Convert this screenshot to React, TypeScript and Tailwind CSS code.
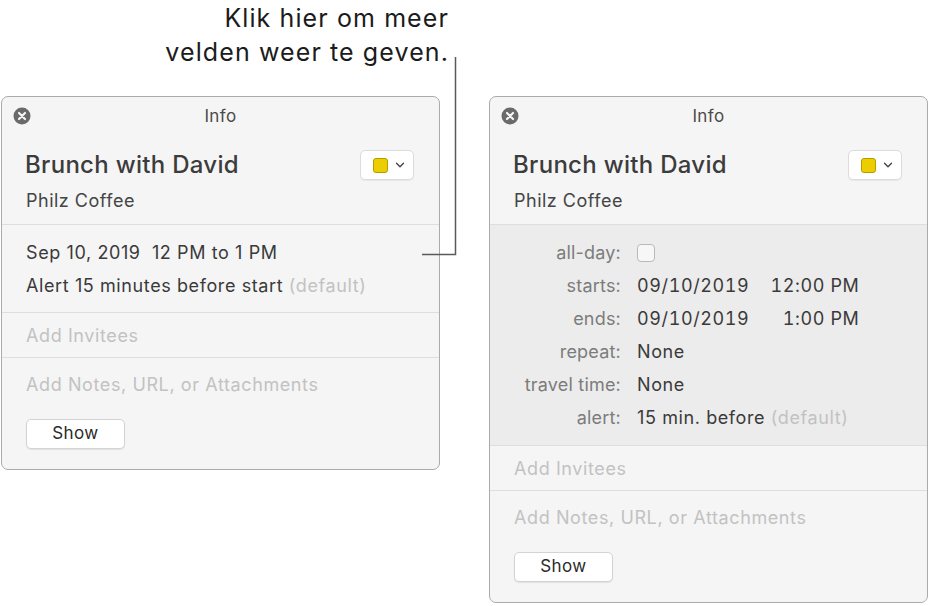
import { ChevronDown } from "lucide-react";

const font = { fontFamily: "Inter, 'Noto Sans', sans-serif" };

function CloseButton() {
  return (
    <svg width="18" height="18" viewBox="0 0 18 18" className="absolute left-[11px] top-[10px]">
      <circle cx="9" cy="9" r="8.5" fill="#6a6a6a" />
      <path d="M6 6 L12 12 M12 6 L6 12" stroke="#f5f5f5" strokeWidth="2.2" strokeLinecap="round" />
    </svg>
  );
}

function ColorPicker() {
  return (
    <div className="flex h-[30px] w-[54px] items-center gap-[5px] rounded-[5px] border border-[#dcdcdc] bg-white pl-[12px] shadow-[0_1px_1px_rgba(0,0,0,0.06)]">
      <div className="h-[15px] w-[15px] rounded-[3px] border border-[#b59d00] bg-[#ecce00]" />
      <ChevronDown className="h-[14px] w-[14px] text-[#444]" strokeWidth={2.4} />
    </div>
  );
}

function Header() {
  return (
    <>
      <div className="relative flex h-[38px] items-center justify-center pt-[1px] text-[17px] tracking-[0.4px] text-[#4a4a4a]">
        <CloseButton />
        Info
      </div>
      <div className="border-b border-[#dedede] px-[24px] pb-[11px] pt-[15px]">
        <div className="flex h-[30px] items-center justify-between">
          <span className="-ml-[1px] text-[24px] font-medium tracking-[0.3px] text-[#3c3c3c]">Brunch with David</span>
          <div className="mr-[1px]">
            <ColorPicker />
          </div>
        </div>
        <div className="mt-[9px] h-[24px] text-[18px] leading-[24px] tracking-[0.5px] text-[#444]">Philz Coffee</div>
      </div>
    </>
  );
}

function Footer() {
  return (
    <>
      <div className="flex h-[45px] items-center border-b border-[#dedede] px-[24px] text-[18px] tracking-[0.6px] text-[#c2c2c2]">
        Add Invitees
      </div>
      <div className="px-[24px] pb-[20px] pt-[15px]">
        <div className="h-[24px] text-[18px] leading-[24px] tracking-[0.6px] text-[#c2c2c2]">Add Notes, URL, or Attachments</div>
        <button className="mt-[22px] h-[30px] w-[99px] rounded-[5px] border border-[#d3d3d3] bg-white text-[17px] tracking-[0.4px] text-[#2a2a2a] shadow-[0_1px_1px_rgba(0,0,0,0.08)]">
          Show
        </button>
      </div>
    </>
  );
}

const rows: { label: string; value: React.ReactNode }[] = [
  {
    label: "all-day:",
    value: <div className="h-[18px] w-[18px] rounded-[4px] border border-[#b9b9b9] bg-[#f7f7f7]" />,
  },
  {
    label: "starts:",
    value: (
      <span className="flex tabular-nums">
        <span>09/10/2019</span>
        <span className="w-[110px] text-right">12:00 PM</span>
      </span>
    ),
  },
  {
    label: "ends:",
    value: (
      <span className="flex tabular-nums">
        <span>09/10/2019</span>
        <span className="w-[110px] text-right">1:00 PM</span>
      </span>
    ),
  },
  { label: "repeat:", value: "None" },
  { label: "travel time:", value: "None" },
  {
    label: "alert:",
    value: (
      <span>
        15 min. before <span className="text-[#c2c2c2]">(default)</span>
      </span>
    ),
  },
];

export default function App() {
  return (
    <div className="relative h-[606px] w-[931px] overflow-hidden bg-white" style={font}>
      <div className="w-[449px] pt-[1px] text-right text-[25px] leading-[34px] tracking-[1.1px] text-[#1b1b1b]">
        Klik hier om meer
        <br />
        velden weer te geven.
      </div>

      <div className="mt-[27px] flex items-start gap-[49px] pl-[1px]">
        <div className="w-[439px] overflow-hidden rounded-[7px] border border-[#ababab] bg-[#f5f5f5]">
          <Header />
          <div className="border-b border-[#dedede] px-[24px] pb-[10px] pt-[11px] text-[18px] tracking-[0.6px] text-[#3a3a3a]">
            <div className="flex h-[33px] items-center">Sep 10, 2019&nbsp;&nbsp;12 PM to 1 PM</div>
            <div className="flex h-[33px] items-center">
              Alert 15 minutes before start&nbsp;<span className="text-[#c2c2c2]">(default)</span>
            </div>
          </div>
          <Footer />
        </div>

        <div className="w-[439px] overflow-hidden rounded-[7px] border border-[#ababab] bg-[#f5f5f5]">
          <Header />
          <div className="border-b border-[#dedede] bg-[#ececec] pb-[11px] pt-[11px] text-[18px]">
            {rows.map((r) => (
              <div key={r.label} className="flex h-[33px] items-center">
                <span className="w-[131px] text-right tracking-[0.2px] text-[#7c7c7c]">{r.label}</span>
                <span className="ml-[16px] flex items-center tracking-[0.6px] text-[#3a3a3a]">{r.value}</span>
              </div>
            ))}
          </div>
          <Footer />
        </div>
      </div>

      <svg className="pointer-events-none absolute left-0 top-0" width="931" height="606">
        <path d="M455.5 57 V254.5 H422" fill="none" stroke="#5a5a5a" strokeWidth="1.5" />
      </svg>
    </div>
  );
}
